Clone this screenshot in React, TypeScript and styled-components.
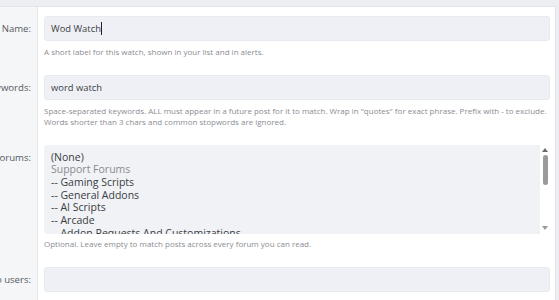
import React from "react";
import styled, { createGlobalStyle } from "styled-components";

const Global = createGlobalStyle`
  html, body { margin: 0; padding: 0; }
  body {
    background: #eceef1;
    font-family: "Open Sans", "Noto Sans", sans-serif;
    overflow: hidden;
  }
  * { box-sizing: border-box; }
`;

const Page = styled.div`
  padding-top: 6px;
  padding-right: 3px;
  height: 300px;
`;

const Form = styled.div`
  background: #ffffff;
  border-top: 1px solid #e2e4e8;
  border-right: 1px solid #e2e4e8;
  height: 100%;
  display: flex;
  flex-direction: column;
  overflow: hidden;
`;

const Row = styled.div<{ $grow?: boolean }>`
  display: grid;
  grid-template-columns: 38px 1fr;
  flex: ${(p) => (p.$grow ? "1 0 auto" : "0 0 auto")};
`;

const LabelCell = styled.div`
  background: #f5f6f8;
  border-right: 1px solid #e4e6ea;
  padding: 9px 6px 9px 0;
  display: flex;
  justify-content: flex-end;
  align-items: flex-start;
  min-width: 0;
`;

const Label = styled.span<{ $lh?: number }>`
  white-space: nowrap;
  font-size: 9.6px;
  color: #555a60;
  line-height: ${(p) => p.$lh ?? 25}px;
`;

const ControlCell = styled.div`
  padding: 9px 5px 9px 6px;
  min-width: 0;
`;

const Input = styled.div`
  height: 25px;
  background: #eef0f5;
  border: 1px solid #e7eaf0;
  border-radius: 3px;
  padding: 0 6px;
  display: flex;
  align-items: center;
  font-size: 9.4px;
  color: #3c3f44;
  white-space: nowrap;
`;

const Caret = styled.span`
  display: inline-block;
  width: 1px;
  height: 13px;
  background: #222;
  margin-left: 0.5px;
`;

const Hint = styled.div<{ $mt?: number }>`
  margin-top: ${(p) => p.$mt ?? 4.5}px;
  font-size: 8px;
  line-height: 11px;
  color: #8a8d93;
`;

const Select = styled.div`
  display: flex;
  height: 89px;
  border-radius: 3px;
  overflow: hidden;
`;

const List = styled.div`
  flex: 1 1 auto;
  background: #f0f2f5;
  padding: 6px 7px 0;
  overflow: hidden;
`;

const Option = styled.div<{ $group?: boolean }>`
  font-size: 10.5px;
  line-height: 12.7px;
  color: ${(p) => (p.$group ? "#888b90" : "#3a3d42")};
  white-space: nowrap;
`;

const ScrollBar = styled.div`
  flex: 0 0 10px;
  background: #ffffff;
  display: flex;
  flex-direction: column;
  align-items: center;
  padding: 3px 0 4px;
`;

const Thumb = styled.div`
  width: 5px;
  height: 30px;
  background: #9a9a9a;
  border-radius: 3px;
  margin-top: 3px;
`;

const Spacer = styled.div`
  flex: 1 1 auto;
`;

const Arrow = ({ down }: { down?: boolean }) => (
  <svg width="6" height="4" viewBox="0 0 6 4">
    <polygon points={down ? "0,0 6,0 3,4" : "0,4 6,4 3,0"} fill={down ? "#9a9a9a" : "#6a6a6a"} />
  </svg>
);

const forums: { t: string; g?: boolean }[] = [
  { t: "(None)" },
  { t: "Support Forums", g: true },
  { t: "-- Gaming Scripts" },
  { t: "-- General Addons" },
  { t: "-- AI Scripts" },
  { t: "-- Arcade" },
  { t: "-- Addon Requests And Customizations" },
];

export default function App() {
  return (
    <>
      <Global />
      <Page>
        <Form>
          <Row>
            <LabelCell>
              <Label>Name:</Label>
            </LabelCell>
            <ControlCell>
              <Input>
                Wod Watch
                <Caret />
              </Input>
              <Hint>A short label for this watch, shown in your list and in alerts.</Hint>
            </ControlCell>
          </Row>
          <Row>
            <LabelCell>
              <Label>Keywords:</Label>
            </LabelCell>
            <ControlCell>
              <Input>word watch</Input>
              <Hint $mt={5}>
                Space-separated keywords. ALL must appear in a future post for it to match. Wrap in "quotes" for exact
                phrase. Prefix with - to exclude. Words shorter than 3 chars and common stopwords are ignored.
              </Hint>
            </ControlCell>
          </Row>
          <Row>
            <LabelCell>
              <Label $lh={26}>Limit to forums:</Label>
            </LabelCell>
            <ControlCell>
              <Select>
                <List>
                  {forums.map((f) => (
                    <Option key={f.t} $group={f.g}>
                      {f.t}
                    </Option>
                  ))}
                </List>
                <ScrollBar>
                  <Arrow />
                  <Thumb />
                  <Spacer />
                  <Arrow down />
                </ScrollBar>
              </Select>
              <Hint>Optional. Leave empty to match posts across every forum you can read.</Hint>
            </ControlCell>
          </Row>
          <Row $grow>
            <LabelCell>
              <Label>Limit to users:</Label>
            </LabelCell>
            <ControlCell>
              <Input />
              <Hint>Optional. Space-separated usernames. Only posts by these users will match.</Hint>
            </ControlCell>
          </Row>
        </Form>
      </Page>
    </>
  );
}
